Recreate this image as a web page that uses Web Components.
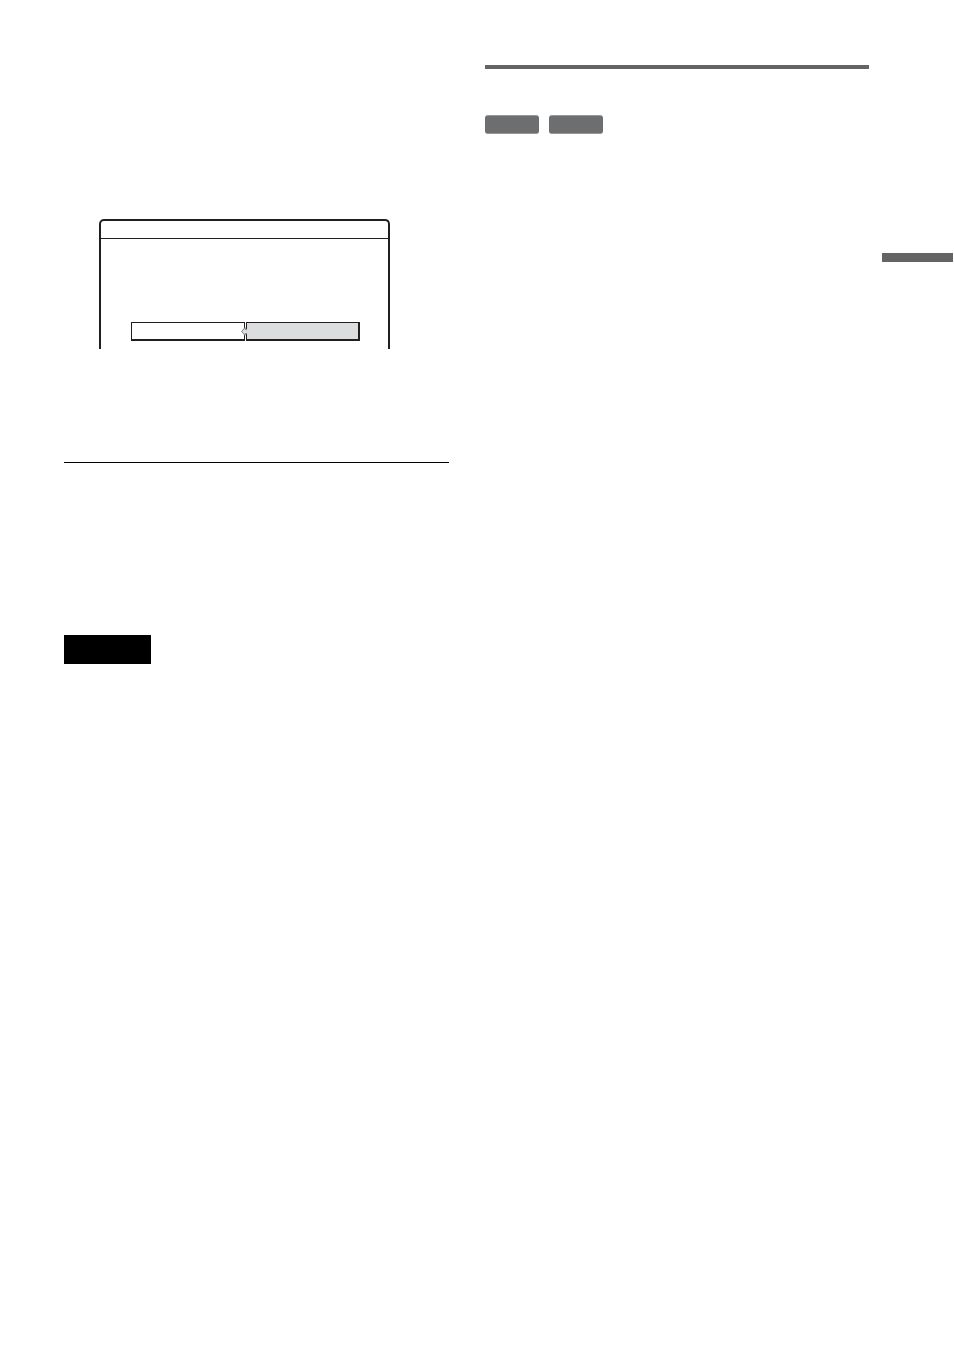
<!DOCTYPE html>
<html lang="en">
<head>
<meta charset="utf-8">
<meta name="viewport" content="width=device-width, initial-scale=1">
<title>Manual page</title>
<style>
  body {
    background: #ffffff;
    font-family: "Liberation Sans", sans-serif;
    margin: 0;
  }
</style>
</head>
<body>
<manual-page>
  <manual-column slot="left">
    <setup-screen>
      <setup-option></setup-option>
      <setup-option selected></setup-option>
    </setup-screen>
    <manual-rule></manual-rule>
    <manual-note></manual-note>
  </manual-column>
  <manual-column slot="right">
    <manual-rule heavy></manual-rule>
    <disc-badges>
      <disc-badge></disc-badge>
      <disc-badge></disc-badge>
    </disc-badges>
  </manual-column>
  <chapter-tab slot="edge"></chapter-tab>
</manual-page>

<script>
class ManualPage extends HTMLElement {
  constructor() {
    super();

    const template = document.createElement( 'template' );
    template.innerHTML = /* template */ `
      <style>
        :host {
          box-sizing: border-box;
          display: grid;
          grid-template-columns: 385fr 36px 384fr 13px 71px;
          min-height: 100vh;
          padding: 65px 1px 0 64px;
        }

        slot[name=right] {
          display: block;
          grid-column: 3;
        }

        slot[name=edge] {
          display: block;
          grid-column: 5;
        }
      </style>
      <slot name="left"></slot>
      <slot name="right"></slot>
      <slot name="edge"></slot>
    `;

    // Root
    this.attachShadow( {mode: 'open'} );
    this.shadowRoot.appendChild( template.content.cloneNode( true ) );
  }
}

class ManualColumn extends HTMLElement {
  constructor() {
    super();

    const template = document.createElement( 'template' );
    template.innerHTML = /* template */ `
      <style>
        :host {
          display: flex;
          flex-direction: column;
          min-width: 0;
        }
      </style>
      <slot></slot>
    `;

    // Root
    this.attachShadow( {mode: 'open'} );
    this.shadowRoot.appendChild( template.content.cloneNode( true ) );
  }
}

// Top part of the setup display, open at the bottom
class SetupScreen extends HTMLElement {
  constructor() {
    super();

    const template = document.createElement( 'template' );
    template.innerHTML = /* template */ `
      <style>
        :host {
          border: solid 2px #231f20;
          border-bottom: none;
          border-radius: 5px 5px 0 0;
          box-sizing: border-box;
          display: block;
          margin: 154px 59px 0 35px;
        }

        header {
          border-bottom: solid 1px #231f20;
          height: 17px;
        }

        div {
          display: grid;
          gap: 1px;
          grid-template-columns: 1fr 1fr;
          padding: 83px 28px 8px 30px;
        }
      </style>
      <header></header>
      <div>
        <slot></slot>
      </div>
    `;

    // Root
    this.attachShadow( {mode: 'open'} );
    this.shadowRoot.appendChild( template.content.cloneNode( true ) );
  }
}

class SetupOption extends HTMLElement {
  constructor() {
    super();

    const template = document.createElement( 'template' );
    template.innerHTML = /* template */ `
      <style>
        :host {
          background: #ffffff;
          border: solid 1px #231f20;
          border-bottom-width: 2px;
          box-sizing: border-box;
          display: block;
          height: 19px;
          position: relative;
        }

        :host( [selected] ) {
          background: #dcddde;
          border-right-width: 2px;
        }

        svg {
          display: none;
          left: -6px;
          position: absolute;
          top: 4px;
        }

        :host( [selected] ) svg {
          display: block;
        }
      </style>
      <svg width="7" height="9" viewBox="0 0 7 9">
        <path d="M4 .5V2.2H7V6.8H4V8.5L.5 4.5Z" fill="#dcddde"/>
        <path d="M6 2.2H4V.7L.6 4.5L4 8.3V6.8H6" fill="none" stroke="#6d6e70" stroke-width=".9"/>
      </svg>
    `;

    // Root
    this.attachShadow( {mode: 'open'} );
    this.shadowRoot.appendChild( template.content.cloneNode( true ) );
  }
}

class ManualRule extends HTMLElement {
  constructor() {
    super();

    const template = document.createElement( 'template' );
    template.innerHTML = /* template */ `
      <style>
        :host {
          background: #000000;
          display: block;
          height: 1px;
          margin-top: 113px;
        }

        :host( [heavy] ) {
          background: #636466;
          height: 4px;
          margin-top: 0;
        }
      </style>
    `;

    // Root
    this.attachShadow( {mode: 'open'} );
    this.shadowRoot.appendChild( template.content.cloneNode( true ) );
  }
}

class ManualNote extends HTMLElement {
  constructor() {
    super();

    const template = document.createElement( 'template' );
    template.innerHTML = /* template */ `
      <style>
        :host {
          align-self: flex-start;
          background: #000000;
          display: block;
          height: 29px;
          margin-top: 172px;
          width: 87px;
        }
      </style>
      <slot></slot>
    `;

    // Root
    this.attachShadow( {mode: 'open'} );
    this.shadowRoot.appendChild( template.content.cloneNode( true ) );
  }
}

class DiscBadges extends HTMLElement {
  constructor() {
    super();

    const template = document.createElement( 'template' );
    template.innerHTML = /* template */ `
      <style>
        :host {
          display: flex;
          gap: 10px;
          margin-top: 46px;
        }
      </style>
      <slot></slot>
    `;

    // Root
    this.attachShadow( {mode: 'open'} );
    this.shadowRoot.appendChild( template.content.cloneNode( true ) );
  }
}

class DiscBadge extends HTMLElement {
  constructor() {
    super();

    const template = document.createElement( 'template' );
    template.innerHTML = /* template */ `
      <style>
        :host {
          background: #6d6e70;
          border-bottom: solid 1px #98999b;
          border-radius: 3px;
          border-top: solid 1px #98999b;
          box-sizing: border-box;
          display: block;
          height: 19px;
          width: 54px;
        }
      </style>
      <slot></slot>
    `;

    // Root
    this.attachShadow( {mode: 'open'} );
    this.shadowRoot.appendChild( template.content.cloneNode( true ) );
  }
}

class ChapterTab extends HTMLElement {
  constructor() {
    super();

    const template = document.createElement( 'template' );
    template.innerHTML = /* template */ `
      <style>
        :host {
          background: #636466;
          display: block;
          height: 9px;
          margin-top: 188px;
        }
      </style>
      <slot></slot>
    `;

    // Root
    this.attachShadow( {mode: 'open'} );
    this.shadowRoot.appendChild( template.content.cloneNode( true ) );
  }
}

window.customElements.define( 'manual-page', ManualPage );
window.customElements.define( 'manual-column', ManualColumn );
window.customElements.define( 'setup-screen', SetupScreen );
window.customElements.define( 'setup-option', SetupOption );
window.customElements.define( 'manual-rule', ManualRule );
window.customElements.define( 'manual-note', ManualNote );
window.customElements.define( 'disc-badges', DiscBadges );
window.customElements.define( 'disc-badge', DiscBadge );
window.customElements.define( 'chapter-tab', ChapterTab );
</script>
</body>
</html>
